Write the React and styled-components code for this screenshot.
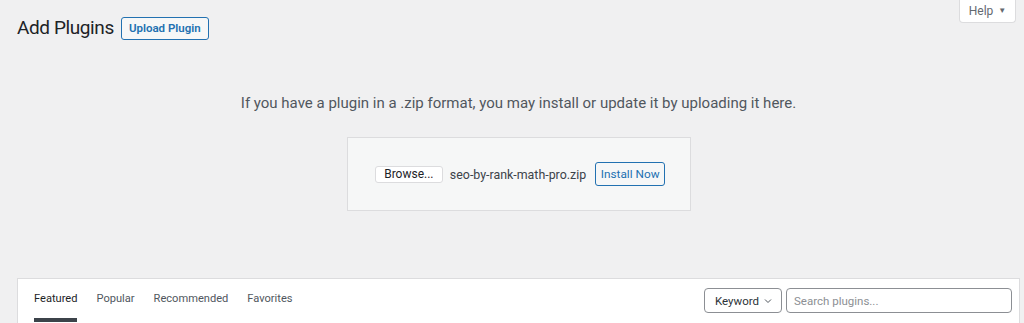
import React from "react";
import styled, { createGlobalStyle } from "styled-components";

const GlobalStyle = createGlobalStyle`
    html, body {
        margin: 0;
        padding: 0;
        background: #f0f0f1;
        font-family: Roboto, "Liberation Sans", sans-serif;
        color: #3c434a;
        overflow: hidden;
    }
`;

const tabs = ["Featured", "Popular", "Recommended", "Favorites"];

export default function App() {
    return (
        <>
            <GlobalStyle />
            <Page>
                <TopBar>
                    <TitleRow>
                        <Title>Add Plugins</Title>
                        <OutlineButton>Upload Plugin</OutlineButton>
                    </TitleRow>
                    <HelpTab>
                        Help <Caret>▼</Caret>
                    </HelpTab>
                </TopBar>

                <UploadSection>
                    <InstallHelp>
                        If you have a plugin in a .zip format, you may install or update it by uploading it here.
                    </InstallHelp>
                    <UploadForm>
                        <BrowseButton>Browse...</BrowseButton>
                        <FileName>seo-by-rank-math-pro.zip</FileName>
                        <InstallButton>Install Now</InstallButton>
                    </UploadForm>
                </UploadSection>

                <Filter>
                    <FilterLinks>
                        {tabs.map((t, i) => (
                            <FilterLink key={t} $current={i === 0}>{t}</FilterLink>
                        ))}
                    </FilterLinks>
                    <SearchForm>
                        <Select>
                            Keyword
                            <svg width="10" height="10" viewBox="0 0 20 20" fill="none">
                                <path d="M4 7l6 6 6-6" stroke="#50575e" strokeWidth="2" />
                            </svg>
                        </Select>
                        <SearchInput>Search plugins...</SearchInput>
                    </SearchForm>
                </Filter>
            </Page>
        </>
    );
}

const Page = styled.div`
    padding: 0 4px 0 17px;
`;

const TopBar = styled.div`
    display: flex;
    justify-content: space-between;
    align-items: flex-start;
`;

const TitleRow = styled.div`
    display: flex;
    align-items: center;
    gap: 7px;
    padding-top: 15px;
`;

const Title = styled.h1`
    margin: 0;
    font-size: 19px;
    font-weight: 400;
    letter-spacing: -0.4px;
    line-height: 26px;
    color: #1d2327;
`;

const OutlineButton = styled.button`
    height: 23px;
    width: 88px;
    padding: 0;
    border: 1px solid #2271b1;
    border-radius: 3px;
    background: #f6f7f7;
    color: #2271b1;
    font-family: inherit;
    font-size: 11.5px;
    font-weight: 600;
    line-height: 21px;
`;

const HelpTab = styled.div`
    width: 57px;
    height: 24px;
    box-sizing: border-box;
    margin-right: 4px;
    margin-top: -1px;
    border: 1px solid #dcdcde;
    border-top: none;
    border-radius: 0 0 4px 4px;
    background: #fff;
    color: #646970;
    font-size: 12px;
    display: flex;
    align-items: center;
    justify-content: center;
    gap: 5px;
`;

const Caret = styled.span`
    font-size: 8px;
`;

const UploadSection = styled.div`
    display: flex;
    flex-direction: column;
    align-items: center;
`;

const InstallHelp = styled.p`
    margin: 0;
    padding: 51px 0 23px;
    font-size: 15px;
    line-height: 22px;
    color: #50575e;
`;

const UploadForm = styled.div`
    width: 344px;
    height: 74px;
    box-sizing: border-box;
    background: #f6f7f7;
    border: 1px solid #dcdcde;
    display: flex;
    align-items: center;
    justify-content: center;
    gap: 7px;
    padding-left: 3px;
`;

const BrowseButton = styled.button`
    height: 17px;
    width: 68px;
    padding: 0;
    border: 1px solid #dcdcde;
    border-radius: 3px;
    background: #fff;
    color: #1d2327;
    font-family: inherit;
    font-size: 12px;
    line-height: 15px;
`;

const FileName = styled.span`
    font-size: 12.4px;
    color: #3c434a;
`;

const InstallButton = styled.button`
    height: 24px;
    width: 70px;
    padding: 0;
    margin-left: 2px;
    border: 1px solid #2271b1;
    border-radius: 3px;
    background: #f6f7f7;
    color: #2271b1;
    font-family: inherit;
    font-size: 11.8px;
    line-height: 22px;
`;

const Filter = styled.div`
    margin-top: 67px;
    height: 60px;
    box-sizing: border-box;
    background: #fff;
    border: 1px solid #dcdcde;
    display: flex;
    justify-content: space-between;
    align-items: flex-start;
    padding: 0 7px 0 16px;
`;

const FilterLinks = styled.ul`
    display: flex;
    gap: 19px;
    margin: 0;
    padding: 0;
    list-style: none;
`;

const FilterLink = styled.li`
    padding: 12px 0 0;
    height: 43px;
    box-sizing: border-box;
    font-size: 11.1px;
    line-height: 16px;
    color: ${(p) => (p.$current ? "#1d2327" : "#50575e")};
    border-bottom: 4px solid ${(p) => (p.$current ? "#3c434a" : "transparent")};
`;

const SearchForm = styled.div`
    display: flex;
    gap: 4px;
    padding-top: 9px;
`;

const Select = styled.div`
    width: 78px;
    height: 25px;
    box-sizing: border-box;
    border: 1px solid #8c8f94;
    border-radius: 4px;
    display: flex;
    align-items: center;
    justify-content: space-between;
    padding: 0 8px 0 10px;
    font-size: 11.5px;
    color: #2c3338;
`;

const SearchInput = styled.div`
    width: 226px;
    height: 25px;
    box-sizing: border-box;
    border: 1px solid #8c8f94;
    border-radius: 4px;
    padding: 0 7px;
    display: flex;
    align-items: center;
    font-size: 11.5px;
    color: #8c8f94;
`;
